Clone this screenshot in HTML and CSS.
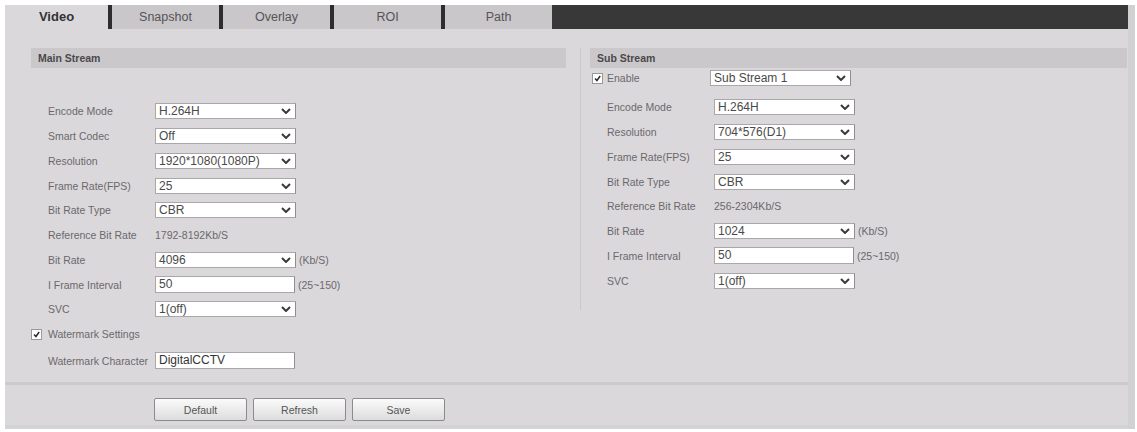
FILE: index.html
```html
<!DOCTYPE html>
<html>
<head>
<meta charset="utf-8">
<link rel="stylesheet" href="styles.css">
</head>
<body>
<div class="page">
  <div class="tabs">
    <div class="tab active">Video</div>
    <div class="tab">Snapshot</div>
    <div class="tab">Overlay</div>
    <div class="tab">ROI</div>
    <div class="tab">Path</div>
    <div class="tab-fill"></div>
  </div>
  <div class="main">
    <div class="col col-left">
      <div class="sec-head">Main Stream</div>
      <div class="form form-left">
        <div class="row"><span class="label">Encode Mode</span><div class="select">H.264H<svg class="chev" viewBox="0 0 10 6"><polyline points="1,1 5,5 9,1"/></svg></div></div>
        <div class="row"><span class="label">Smart Codec</span><div class="select">Off<svg class="chev" viewBox="0 0 10 6"><polyline points="1,1 5,5 9,1"/></svg></div></div>
        <div class="row"><span class="label">Resolution</span><div class="select">1920*1080(1080P)<svg class="chev" viewBox="0 0 10 6"><polyline points="1,1 5,5 9,1"/></svg></div></div>
        <div class="row"><span class="label">Frame Rate(FPS)</span><div class="select">25<svg class="chev" viewBox="0 0 10 6"><polyline points="1,1 5,5 9,1"/></svg></div></div>
        <div class="row"><span class="label">Bit Rate Type</span><div class="select">CBR<svg class="chev" viewBox="0 0 10 6"><polyline points="1,1 5,5 9,1"/></svg></div></div>
        <div class="row"><span class="label">Reference Bit Rate</span><span class="plain">1792-8192Kb/S</span></div>
        <div class="row"><span class="label">Bit Rate</span><div class="select">4096<svg class="chev" viewBox="0 0 10 6"><polyline points="1,1 5,5 9,1"/></svg></div><span class="unit">(Kb/S)</span></div>
        <div class="row"><span class="label">I Frame Interval</span><div class="input">50</div><span class="unit">(25~150)</span></div>
        <div class="row"><span class="label">SVC</span><div class="select">1(off)<svg class="chev" viewBox="0 0 10 6"><polyline points="1,1 5,5 9,1"/></svg></div></div>
        <div class="row"><span class="check"><svg viewBox="0 0 11 11"><polyline points="2.5,5.5 4.8,8 8.8,2.5"/></svg></span><span class="check-label">Watermark Settings</span></div>
        <div class="row row-wm"><span class="label label-wm">Watermark Character</span><div class="input input-wm">DigitalCCTV</div></div>
      </div>
    </div>
    <div class="col col-right">
      <div class="sec-head">Sub Stream</div>
      <div class="row row-enable"><span class="check check-r"><svg viewBox="0 0 11 11"><polyline points="2.5,5.5 4.8,8 8.8,2.5"/></svg></span><span class="label label-enable">Enable</span><div class="select">Sub Stream 1<svg class="chev" viewBox="0 0 10 6"><polyline points="1,1 5,5 9,1"/></svg></div></div>
      <div class="form form-right">
        <div class="row"><span class="label">Encode Mode</span><div class="select">H.264H<svg class="chev" viewBox="0 0 10 6"><polyline points="1,1 5,5 9,1"/></svg></div></div>
        <div class="row"><span class="label">Resolution</span><div class="select">704*576(D1)<svg class="chev" viewBox="0 0 10 6"><polyline points="1,1 5,5 9,1"/></svg></div></div>
        <div class="row"><span class="label">Frame Rate(FPS)</span><div class="select">25<svg class="chev" viewBox="0 0 10 6"><polyline points="1,1 5,5 9,1"/></svg></div></div>
        <div class="row"><span class="label">Bit Rate Type</span><div class="select">CBR<svg class="chev" viewBox="0 0 10 6"><polyline points="1,1 5,5 9,1"/></svg></div></div>
        <div class="row"><span class="label">Reference Bit Rate</span><span class="plain">256-2304Kb/S</span></div>
        <div class="row"><span class="label">Bit Rate</span><div class="select">1024<svg class="chev" viewBox="0 0 10 6"><polyline points="1,1 5,5 9,1"/></svg></div><span class="unit">(Kb/S)</span></div>
        <div class="row"><span class="label">I Frame Interval</span><div class="input">50</div><span class="unit">(25~150)</span></div>
        <div class="row"><span class="label">SVC</span><div class="select">1(off)<svg class="chev" viewBox="0 0 10 6"><polyline points="1,1 5,5 9,1"/></svg></div></div>
      </div>
    </div>
  </div>
  <div class="footer">
    <button class="btn">Default</button>
    <button class="btn">Refresh</button>
    <button class="btn">Save</button>
  </div>
</div>
</body>
</html>
```

FILE: styles.css
```css
html, body {
  margin: 0;
  padding: 0;
  background: #ffffff;
}

body {
  font-family: "Liberation Sans", Arial, sans-serif;
  font-size: 10.5px;
  color: #6a686b;
}

.page {
  margin: 5px 0 0 5px;
  width: 1123px;
  height: 424px;
  background: #dbd8dc;
  border-right: 7px solid #d1d0d3;
  display: flex;
  flex-direction: column;
}

.tabs {
  display: flex;
  height: 24px;
  flex: none;
}

.tab {
  width: 107px;
  border-left: 4px solid #2d2d2d;
  background: #cac7cb;
  color: #555;
  font-size: 12.5px;
  line-height: 24px;
  text-align: center;
}

.tab.active {
  width: 103px;
  border-left: none;
  background: transparent;
  color: #333;
  font-size: 13px;
  font-weight: bold;
}

.tab-fill {
  flex: 1;
  background: #383838;
}

.main {
  flex: 1;
  display: flex;
  align-items: flex-start;
  padding: 19px 0 0 26px;
}

.col-left {
  width: 535px;
}

.col-right {
  width: 537px;
  margin-left: 14px;
  padding-left: 9px;
  border-left: 1px solid #cbc8cc;
  height: 262px;
}

.sec-head {
  height: 20px;
  line-height: 20px;
  background: #cbc8cc;
  color: #4a484b;
  font-weight: bold;
  font-size: 10.5px;
  padding-left: 7px;
}

.form-left {
  margin-top: 31px;
}

.form-right {
  margin-top: 7px;
}

.row {
  display: flex;
  align-items: center;
  height: 24.75px;
}

.label {
  width: 107px;
  padding-left: 17px;
  flex: none;
  white-space: nowrap;
}

.select, .input {
  position: relative;
  width: 141px;
  height: 16px;
  box-sizing: border-box;
  background: #fff;
  border: 1px solid #a9a7aa;
  border-right-color: #8f8d90;
  color: #4a4a4a;
  font-size: 12px;
  line-height: 14px;
  padding-left: 3px;
  white-space: nowrap;
}

.input {
  width: 140px;
  height: 17px;
  line-height: 15px;
}

.chev {
  position: absolute;
  right: 4px;
  top: 4px;
  width: 10px;
  height: 6px;
  fill: none;
  stroke: #3a3a3a;
  stroke-width: 2;
}

.plain {
  color: #6a686b;
}

.unit {
  margin-left: 3px;
  color: #6a686b;
}

.check {
  width: 11px;
  height: 11px;
  box-sizing: border-box;
  background: #fff;
  border: 1px solid #9a989b;
  flex: none;
}

.check svg {
  display: block;
  width: 9px;
  height: 9px;
  fill: none;
  stroke: #2a2a2a;
  stroke-width: 1.8;
}

.check-label {
  margin-left: 6px;
}

.row-wm {
  margin-top: 2px;
}

.input-wm {
  color: #333;
}

.row-enable {
  height: 20px;
}

.check-r {
  margin-left: 2px;
}

.label-enable {
  width: 103px;
  padding-left: 4px;
}

.footer {
  height: 47px;
  box-sizing: border-box;
  flex: none;
  border-top: 3px solid #cdcacd;
  border-bottom: 4px solid #d3d2d5;
  display: flex;
  align-items: flex-start;
  padding: 13px 0 0 149px;
  gap: 6px;
}

.btn {
  width: 93px;
  height: 23px;
  background: linear-gradient(#fbfbfb, #dcdcdc);
  border: 1px solid #8c8a8d;
  border-radius: 2px;
  font-family: "Liberation Sans", Arial, sans-serif;
  font-size: 10.5px;
  color: #555;
  padding: 0;
}
```
